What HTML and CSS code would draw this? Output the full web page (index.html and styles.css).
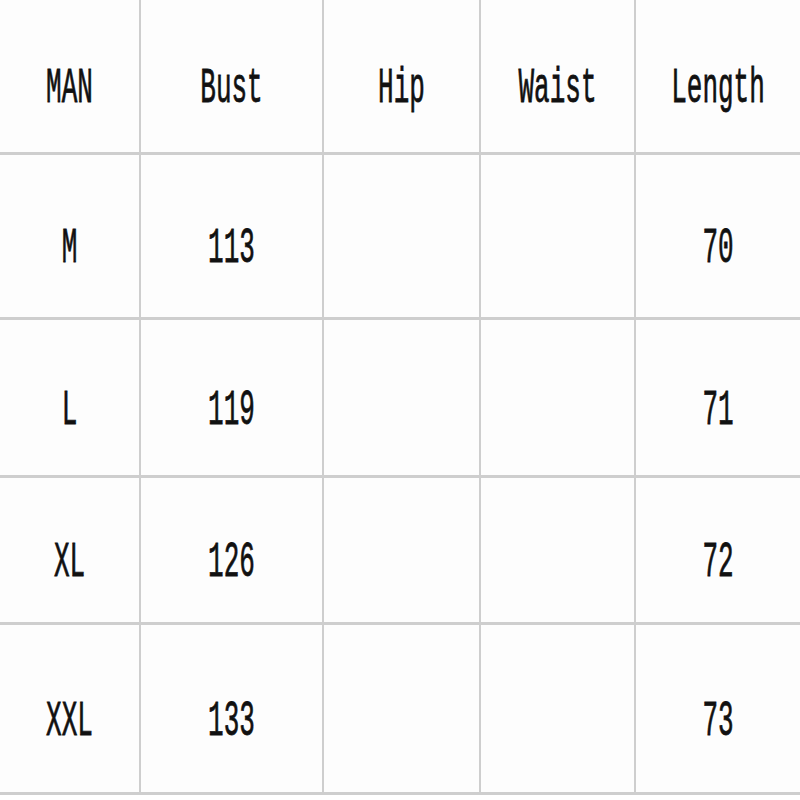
FILE: index.html
```html
<!DOCTYPE html>
<html>
<head>
<meta charset="utf-8">
<link rel="stylesheet" href="styles.css">
</head>
<body>
<div class="chart">
  <div class="cell"><span class="t">MAN</span></div>
  <div class="cell"><span class="t">Bust</span></div>
  <div class="cell"><span class="t">Hip</span></div>
  <div class="cell"><span class="t">Waist</span></div>
  <div class="cell"><span class="t">Length</span></div>

  <div class="cell"><span class="t">M</span></div>
  <div class="cell"><span class="t">113</span></div>
  <div class="cell"></div>
  <div class="cell"></div>
  <div class="cell"><span class="t">70</span></div>

  <div class="cell"><span class="t">L</span></div>
  <div class="cell"><span class="t">119</span></div>
  <div class="cell"></div>
  <div class="cell"></div>
  <div class="cell"><span class="t">71</span></div>

  <div class="cell"><span class="t">XL</span></div>
  <div class="cell"><span class="t">126</span></div>
  <div class="cell"></div>
  <div class="cell"></div>
  <div class="cell"><span class="t">72</span></div>

  <div class="cell"><span class="t">XXL</span></div>
  <div class="cell"><span class="t">133</span></div>
  <div class="cell"></div>
  <div class="cell"></div>
  <div class="cell"><span class="t">73</span></div>
</div>
</body>
</html>
```

FILE: styles.css
```css
html, body {
  margin: 0;
  padding: 0;
  background: #ffffff;
}
body {
  width: 800px;
  height: 800px;
  overflow: hidden;
}
.chart {
  display: grid;
  grid-template-columns: 139px 181px 155px 153px 164px;
  grid-template-rows: 152px 162px 155px 144px 167px;
  column-gap: 2px;
  row-gap: 3px;
  padding-bottom: 3px;
  background: #cecece;
}
.cell {
  background: #fdfdfd;
  display: flex;
  align-items: center;
  justify-content: center;
  padding-top: 24px;
  box-sizing: border-box;
}
.t {
  display: inline-block;
  font-family: "Liberation Mono", "Courier New", monospace;
  font-size: 26px;
  line-height: 1;
  color: #111111;
  transform: scaleY(1.95);
  -webkit-text-stroke: 0.4px #111111;
}
```
